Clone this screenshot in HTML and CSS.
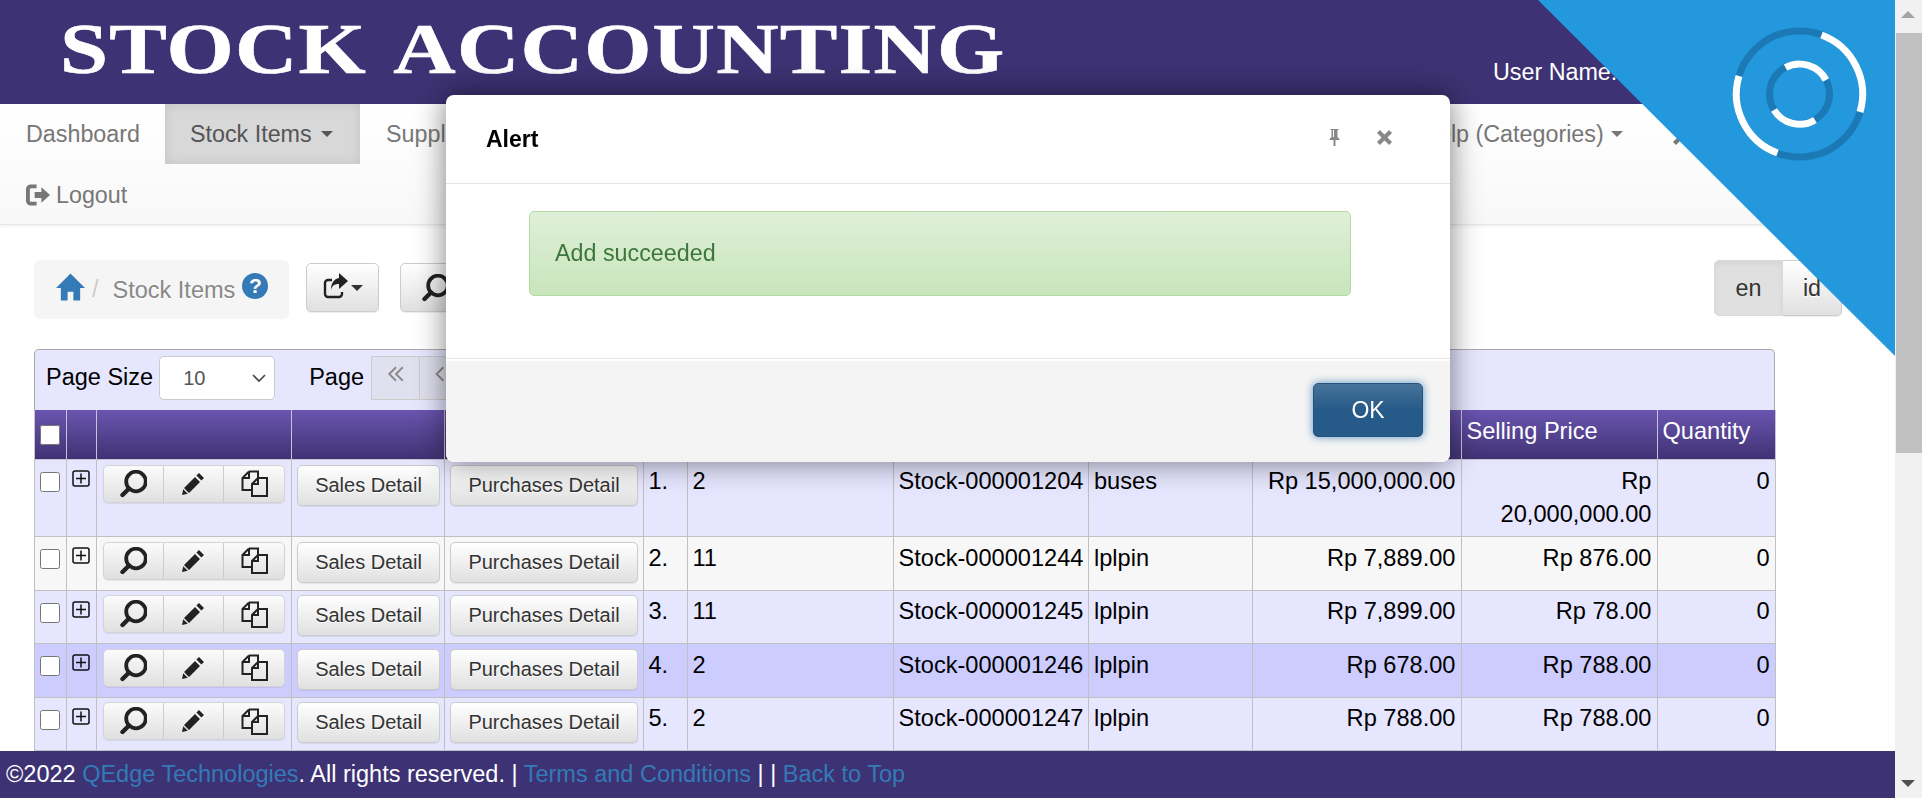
FILE: index.html
```html
<!DOCTYPE html>
<html lang="en">

<head>
    <meta charset="UTF-8">
    <meta name="viewport" content="width=device-width, initial-scale=1.0">
    <title>Stock Items</title>
    <link rel="stylesheet" href="styles.css">
</head>

<body>
    <div class="page">
        <header class="site-header">
            <div class="logo">STOCK ACCOUNTING</div>
            <div class="user-name">User Name: admin</div>
        </header>

        <nav class="navbar">
            <a class="nav-item nav-first">Dashboard</a>
            <a class="nav-item active">Stock Items <span class="caret"></span></a>
            <a class="nav-item">Suppliers <span class="caret"></span></a>
            <a class="nav-item nav-help">Help (Categories) <span class="caret"></span></a>
            <a class="nav-item nav-tools">
                <svg class="icon-nav" viewBox="0 0 24 24"><path d="M2 20l9-9 3 3-9 9z" fill="#777"/></svg>
            </a>
            <span class="nav-break"></span>
            <a class="nav-item nav-logout">
                <svg class="icon-logout" viewBox="0 0 26 24">
                    <path d="M11 3H5a3 3 0 0 0-3 3v12a3 3 0 0 0 3 3h6" fill="none" stroke="#777" stroke-width="4"/>
                    <path d="M9 9h7V4l9 8-9 8v-5H9z" fill="#777"/>
                </svg>
                Logout
            </a>
        </nav>

        <main class="content">
            <div class="top-row">
                <div class="breadcrumb">
                    <svg class="icon-home" viewBox="0 0 30 28"><path d="M15 0l15 15h-5v13h-7v-9h-6v9H5V15H0z" fill="#337ab7"/></svg>
                    <span class="crumb-sep">/</span>
                    <span class="crumb-text">Stock Items</span>
                    <span class="help-badge">?</span>
                </div>
                <button class="btn btn-export">
                    <svg class="icon-export" viewBox="0 0 26 28">
                        <path d="M9 8H5a3 3 0 0 0-3 3v11a3 3 0 0 0 3 3h11a3 3 0 0 0 3-3v-2" fill="none" stroke="#222" stroke-width="2.4"/>
                        <path d="M16 1l9 8-9 8v-5c-5 0-7 2-8 6 0-7 3-11 8-12z" fill="#222"/>
                    </svg>
                    <span class="caret caret-dark"></span>
                </button>
                <button class="btn btn-search">
                    <svg class="icon-search" viewBox="0 0 28 28"><use href="#search"/></svg>
                </button>
                <div class="lang-group">
                    <button class="btn lang pressed">en</button>
                    <button class="btn lang">id</button>
                </div>
            </div>

            <section class="grid">
                <div class="toolbar">
                    <label class="tool-label">Page Size</label>
                    <div class="select-wrap">
                        <select class="page-size">
                            <option>10</option>
                        </select>
                        <svg class="select-arrow" viewBox="0 0 14 9"><path d="M1 1l6 6 6-6" fill="none" stroke="#444" stroke-width="1.600"/></svg>
                    </div>
                    <label class="tool-label tool-page">Page</label>
                    <div class="pager">
                        <span class="pager-btn">
                            <svg viewBox="0 0 16 16"><path d="M8 2L2 8l6 6M14 2L8 8l6 6" fill="none" stroke="#888" stroke-width="1.6"/></svg>
                        </span>
                        <span class="pager-btn pager-prev">
                            <svg viewBox="0 0 16 16"><path d="M11 2L5 8l6 6" fill="none" stroke="#888" stroke-width="1.6"/></svg>
                        </span>
                    </div>
                </div>

                <table class="stock-table">
                    <colgroup>
                        <col class="c-check"><col class="c-plus"><col class="c-actions"><col class="c-sales"><col class="c-purchases">
                        <col class="c-no"><col class="c-cat"><col class="c-code"><col class="c-name">
                        <col class="c-cost"><col class="c-price"><col class="c-qty">
                    </colgroup>
                    <thead>
                        <tr>
                            <th><input type="checkbox" class="check"></th>
                            <th></th>
                            <th></th>
                            <th></th>
                            <th></th>
                            <th></th>
                            <th></th>
                            <th></th>
                            <th></th>
                            <th></th>
                            <th>Selling Price</th>
                            <th>Quantity</th>
                        </tr>
                    </thead>
                    <tbody id="rows"></tbody>
                </table>
            </section>
        </main>
    </div>

    <svg class="sprite">
        <symbol id="search" viewBox="0 0 28 28">
            <circle cx="17" cy="11.500" r="9.800" fill="none" stroke="currentColor" stroke-width="3.800"/>
            <path d="M10 18.500L3.500 25" stroke="currentColor" stroke-width="4.400" stroke-linecap="round"/>
        </symbol>
        <symbol id="pencil" viewBox="0 0 24 24">
            <path d="M18 1l5 5-2.600 2.600-5-5zM14 5l5 5L8 21l-5-5zM2.200 17.200l4.600 4.600L1 23z" fill="currentColor"/>
        </symbol>
        <symbol id="copy" viewBox="0 0 27 27">
            <path d="M8 1.500h9v6M8 1.500L1.500 8v12h9.500M8 1.500V8H1.500" fill="none" stroke="currentColor" stroke-width="2"/>
            <path d="M17 8h9v18H11V14zM17 8v6h-6" fill="none" stroke="currentColor" stroke-width="2"/>
        </symbol>
    </svg>

    <!-- corner ribbon with spinner -->
    <svg class="ribbon" viewBox="0 0 357 356">
        <polygon points="0,0 357,0 357,356" fill="#2398dd"/>
        <circle cx="261.500" cy="94" r="63" fill="none" stroke="#1b7ab6" stroke-width="7"/>
        <circle cx="261.500" cy="94" r="30" fill="none" stroke="#1b7ab6" stroke-width="7"/>
        <path d="M283.500 35A63 63 0 0 1 322 112" fill="none" stroke="#fff" stroke-width="7"/>
        <path d="M239.500 153A63 63 0 0 1 201 76" fill="none" stroke="#fff" stroke-width="7"/>
        <path d="M247.500 67.500A30 30 0 0 1 288 80" fill="none" stroke="#fff" stroke-width="7"/>
        <path d="M236 110A30 30 0 0 0 277 120" fill="none" stroke="#fff" stroke-width="7"/>
    </svg>

    <div class="modal">
        <div class="modal-header">
            <h4 class="modal-title">Alert</h4>
            <svg class="icon-pin" viewBox="0 0 12 18"><path d="M2 1h8v1H9v7l2 2v1H7v6H5v-6H1v-1l2-2V2H2zM4.500 2v7h1V2z" fill="#888"/></svg>
            <svg class="icon-close" viewBox="0 0 14 14"><path d="M2 2l10 10M12 2L2 12" stroke="#888" stroke-width="3.400"/></svg>
        </div>
        <div class="modal-body">
            <div class="alert-success">Add succeeded</div>
        </div>
        <div class="modal-footer">
            <button class="btn-ok">OK</button>
        </div>
    </div>

    <footer class="site-footer">©2022 <a>QEdge Technologies</a>. All rights reserved. | <a>Terms and Conditions</a> | | <a>Back to Top</a></footer>

    <div class="scrollbar">
        <span class="arrow-up"></span>
        <span class="thumb"></span>
        <span class="arrow-down"></span>
    </div>

    <script>
        const data = [
            ['1.', '2', 'Stock-000001204', 'buses', 'Rp 15,000,000.00', 'Rp 20,000,000.00', '0', 'first'],
            ['2.', '11', 'Stock-000001244', 'lplpin', 'Rp 7,889.00', 'Rp 876.00', '0', 'plain'],
            ['3.', '11', 'Stock-000001245', 'lplpin', 'Rp 7,899.00', 'Rp 78.00', '0', ''],
            ['4.', '2', 'Stock-000001246', 'lplpin', 'Rp 678.00', 'Rp 788.00', '0', 'hover'],
            ['5.', '2', 'Stock-000001247', 'lplpin', 'Rp 788.00', 'Rp 788.00', '0', '']
        ];

        document.getElementById('rows').innerHTML = data.map((row) => `
            <tr class="${row[7]}">
                <td class="cell-check"><input type="checkbox" class="check"></td>
                <td class="cell-plus"><svg class="icon-plus" viewBox="0 0 18 17"><rect x="1" y="1" width="16" height="15" rx="2" fill="none" stroke="#111" stroke-width="1.500"/><path d="M9 3.500v10M4 8.500h10" stroke="#111" stroke-width="1.500"/></svg></td>
                <td class="cell-btn cell-group">
                    <div class="btn-group">
                        <span class="btn-part"><svg class="icon-search" viewBox="0 0 28 28"><use href="#search"/></svg></span>
                        <span class="btn-part"><svg class="icon-pencil" viewBox="0 0 24 24"><use href="#pencil"/></svg></span>
                        <span class="btn-part"><svg class="icon-copy" viewBox="0 0 27 27"><use href="#copy"/></svg></span>
                    </div>
                </td>
                <td class="cell-btn"><button class="btn btn-detail btn-sales">Sales Detail</button></td>
                <td class="cell-btn"><button class="btn btn-detail btn-purchases">Purchases Detail</button></td>
                <td>${row[0]}</td>
                <td>${row[1]}</td>
                <td class="code">${row[2]}</td>
                <td>${row[3]}</td>
                <td class="num">${row[4]}</td>
                <td class="num">${row[5]}</td>
                <td class="num">${row[6]}</td>
            </tr>`).join('');
    </script>
</body>

</html>
```

FILE: styles.css
```css
html,
body {
    height: 798px;
}

body {
    margin: 0;
    overflow: hidden;
    font-family: "Liberation Sans", Arial, sans-serif;
    font-size: 23.300px;
    color: #000;
    background-color: #fff;
}

.page {
    width: 1895px;
    height: 798px;
    overflow: hidden;
}

.sprite {
    display: none;
}

.site-header {
    display: flex;
    justify-content: space-between;
    height: 104px;
    background-color: #3d3273;
    color: #fff;
}

.logo {
    padding: 3px 0 0 50px;
    font-family: "Liberation Serif", serif;
    font-size: 72px;
    font-weight: bold;
    line-height: 92px;
    letter-spacing: 1px;
    word-spacing: 7px;
    white-space: nowrap;
    transform: scaleX(1.2);
    transform-origin: left center;
    -webkit-text-stroke: 0.6px #fff;
}

.user-name {
    padding-top: 56px;
    width: 402px;
    white-space: nowrap;
    line-height: 32px;
}

.navbar {
    display: flex;
    flex-wrap: wrap;
    height: 120px;
    background: linear-gradient(to bottom, #fff, #f8f8f8);
    border-bottom: 1px solid #e7e7e7;
    box-shadow: 0 1px 4px rgba(0, 0, 0, 0.08);
    color: #777;
}

.nav-item {
    display: flex;
    align-items: center;
    gap: 7px;
    height: 60px;
    padding: 0 26px;
    box-sizing: border-box;
    white-space: nowrap;
}

.nav-first {
    padding-right: 25px;
}

.nav-item.active {
    gap: 9px;
    width: 195px;
    padding-left: 25px;
    background: #d8d8d8;
    box-shadow: inset 0 0 12px rgba(0, 0, 0, 0.1);
    color: #555;
}

.nav-help {
    margin-left: 867px;
}

.nav-tools {
    padding: 0;
    margin-left: 22px;
}

.icon-nav {
    width: 24px;
    height: 24px;
}

.nav-break {
    flex-basis: 100%;
    height: 0;
}

.nav-logout {
    gap: 5px;
    padding-top: 2px;
}

.icon-logout {
    width: 25px;
    height: 24px;
}

.caret {
    display: inline-block;
    border-top: 6px solid currentColor;
    border-left: 6px solid transparent;
    border-right: 6px solid transparent;
}

.caret-dark {
    color: #333;
}

.content {
    padding: 35px 0 0 34px;
}

.top-row {
    display: flex;
    align-items: flex-start;
    height: 89px;
}

.breadcrumb {
    display: flex;
    align-items: center;
    width: 255px;
    height: 59px;
    padding-left: 22px;
    box-sizing: border-box;
    background-color: #f5f5f5;
    border-radius: 6px;
    color: #777;
    font-size: 23.500px;
}

.icon-home {
    width: 29px;
    height: 28px;
    margin-top: -6px;
}

.crumb-sep {
    margin-left: 7px;
    color: #ccc;
}

.crumb-text {
    margin-left: 14px;
    margin-top: 2px;
    color: #888;
    text-shadow: 0 1px 0 #fff;
}

.help-badge {
    width: 26px;
    height: 26px;
    margin: -8px 0 0 7px;
    border-radius: 50%;
    background-color: #337ab7;
    color: #fff;
    font-size: 21px;
    font-weight: bold;
    line-height: 26px;
    text-align: center;
}

.btn {
    border: 1px solid #ccc;
    border-radius: 5px;
    background: linear-gradient(to bottom, #fff, #e0e0e0);
    box-shadow: inset 0 1px 0 rgba(255, 255, 255, 0.15), 0 1px 1px rgba(0, 0, 0, 0.075);
    color: #333;
    font-family: inherit;
    text-shadow: 0 1px 0 #fff;
    padding: 0;
}

.btn-export {
    display: flex;
    align-items: center;
    justify-content: center;
    gap: 2px;
    width: 73px;
    height: 49px;
    margin: 3px 0 0 17px;
}

.icon-export {
    width: 26px;
    height: 28px;
    margin-top: -4px;
}

.btn-search {
    width: 100px;
    height: 49px;
    margin: 3px 0 0 21px;
    display: flex;
    align-items: center;
    padding-left: 20px;
}

.lang-group {
    display: flex;
    margin-left: 1214px;
}

.lang {
    width: 59px;
    height: 56px;
    font-size: 23.300px;
    border-radius: 0 5px 5px 0;
    border-left: 0;
}

.lang.pressed {
    width: 69px;
    background: #e0e0e0;
    border-radius: 5px 0 0 5px;
    border: 1px solid #dbdbdb;
    box-shadow: inset 0 3px 5px rgba(0, 0, 0, 0.05);
    text-shadow: none;
}

.grid {
    width: 1741px;
}

.toolbar {
    display: flex;
    align-items: center;
    height: 61px;
    padding: 0 0 5px 11px;
    box-sizing: border-box;
    background-color: #e6e6ff;
    border: 1px solid #aaa;
    border-bottom: 0;
    border-radius: 5px 5px 0 0;
    font-size: 23.500px;
}

.tool-label {
    white-space: nowrap;
}

.select-wrap {
    position: relative;
    margin-left: 6px;
}

.page-size {
    display: block;
    width: 116px;
    height: 44px;
    padding-left: 23px;
    appearance: none;
    background-color: #fff;
    border: 1px solid #ccc;
    border-radius: 5px;
    color: #555;
    font-family: inherit;
    font-size: 20px;
}

.select-arrow {
    position: absolute;
    right: 9px;
    top: 18px;
    width: 14px;
    height: 9px;
}

.tool-page {
    margin-left: 34px;
}

.pager {
    display: flex;
    margin-left: 7px;
}

.pager-btn {
    display: flex;
    justify-content: center;
    width: 49px;
    height: 44px;
    box-sizing: border-box;
    background-color: #e0e0ee;
    border: 1px solid #ccc;
    margin-right: -1px;
}

.pager-btn svg {
    width: 18px;
    height: 18px;
    margin-top: 8px;
}

.pager-prev {
    justify-content: flex-start;
    padding-left: 11px;
}

.stock-table {
    width: 100%;
    table-layout: fixed;
    border-collapse: collapse;
    font-size: 23.600px;
}

.c-check { width: 31.500px; }
.c-plus { width: 30px; }
.c-actions { width: 195.500px; }
.c-sales { width: 153px; }
.c-purchases { width: 198.500px; }
.c-no { width: 44px; }
.c-cat { width: 206px; }
.c-code { width: 195.500px; }
.c-name { width: 163.500px; }
.c-cost { width: 209px; }
.c-price { width: 196px; }
.c-qty { width: 118px; }

.stock-table th {
    height: 42px;
    padding: 0 5px 7px;
    background: linear-gradient(to bottom, #6a55b0, #3f3273);
    border: 1px solid #c4c4d4;
    border-top: 0;
    color: #fff;
    font-size: 23.600px;
    font-weight: normal;
    text-align: left;
}

.stock-table td {
    height: 53.500px;
    padding: 4.500px 5px 0;
    box-sizing: border-box;
    border: 1px solid #c0c0c0;
    background-color: #e6e6ff;
    line-height: 33.700px;
    vertical-align: top;
    white-space: normal;
}

.stock-table tr.first td {
    height: 77px;
}

.stock-table tr.plain td {
    background-color: #f7f7f7;
}

.stock-table tr.hover td {
    background-color: #ccccff;
}

.stock-table .num {
    text-align: right;
}

.stock-table .code {
    white-space: nowrap;
}

.stock-table .cell-check {
    padding: 8px 0 0 5px;
}

.stock-table th:first-child {
    padding: 0 0 3px 5px;
}

.check {
    display: block;
    width: 20px;
    height: 20px;
    margin: 4px 0 0;
}

.stock-table .cell-plus {
    padding: 10px 0 0 5px;
    line-height: 0;
}

.icon-plus {
    width: 18px;
    height: 17px;
}

.stock-table .cell-btn {
    padding: 4.500px 0 0 5px;
    line-height: normal;
}

.stock-table .cell-group {
    padding-left: 6px;
}

.btn-group {
    display: flex;
    width: 182px;
    height: 38px;
    box-sizing: border-box;
    border: 1px solid #d4d4d4;
    border-radius: 5px;
    background: linear-gradient(to bottom, #fbfbfb, #e0e0e0);
    box-shadow: 0 1px 1px rgba(0, 0, 0, 0.075);
}

.btn-part {
    display: flex;
    align-items: center;
    justify-content: center;
    flex: 1;
    border-right: 1px solid #ccc;
    color: #222;
}

.btn-part:last-child {
    border-right: 0;
}

.icon-search {
    width: 28px;
    height: 28px;
    color: #222;
}

.icon-pencil {
    width: 24px;
    height: 24px;
}

.icon-copy {
    width: 27px;
    height: 27px;
    margin-left: 2px;
}

.btn-detail {
    display: block;
    height: 41px;
    font-size: 20px;
}

.btn-sales {
    width: 143px;
}

.btn-purchases {
    width: 188px;
}

.ribbon {
    position: fixed;
    top: 0;
    left: 1538px;
    width: 357px;
    height: 356px;
}

.modal {
    position: fixed;
    top: 95px;
    left: 446px;
    width: 1004px;
    height: 367px;
    background-color: #fff;
    border-radius: 8px;
    box-shadow: 0 0 30px rgba(0, 0, 0, 0.5);
    overflow: hidden;
}

.modal-header {
    display: flex;
    align-items: center;
    height: 89px;
    box-sizing: border-box;
    padding: 0 57px 0 40px;
    border-bottom: 1px solid #e5e5e5;
}

.modal-title {
    flex: 1;
    margin: 0;
    font-size: 23px;
}

.icon-pin {
    width: 13px;
    height: 18px;
    margin: -4px 35px 0 0;
}

.icon-close {
    width: 17px;
    height: 17px;
    margin-top: -4px;
}

.modal-body {
    height: 175px;
    box-sizing: border-box;
    padding: 27px 99px 0 83px;
    border-bottom: 1px solid #e5e5e5;
}

.alert-success {
    height: 85px;
    box-sizing: border-box;
    padding-left: 25px;
    border: 1px solid #b2dba1;
    border-radius: 5px;
    background: linear-gradient(to bottom, #dff0d8, #c8e5bc);
    color: #3c763d;
    line-height: 83px;
}

.modal-footer {
    display: flex;
    justify-content: flex-end;
    height: 103px;
    box-sizing: border-box;
    padding: 22px 27px 0 0;
    border-top: 2px solid #fff;
    background-color: #f4f4f4;
}

.btn-ok {
    width: 110px;
    height: 54px;
    border: 1px solid #245580;
    border-radius: 5px;
    background: linear-gradient(to bottom, #47739a, #265a88 50%);
    box-shadow: 0 0 8px rgba(51, 122, 183, 0.8);
    color: #fff;
    font-family: inherit;
    font-size: 23px;
}

.site-footer {
    position: fixed;
    left: 0;
    top: 751px;
    width: 1895px;
    height: 47px;
    padding-left: 6px;
    box-sizing: border-box;
    background-color: #3d3273;
    color: #fff;
    font-size: 23.500px;
    line-height: 47px;
    white-space: nowrap;
}

.site-footer a {
    color: #337ab7;
}

.scrollbar {
    position: fixed;
    top: 0;
    left: 1895px;
    width: 27px;
    height: 798px;
    background-color: #f1f1f1;
}

.thumb {
    position: absolute;
    top: 33px;
    left: 1px;
    width: 26px;
    height: 420px;
    background-color: #c1c1c1;
}

.arrow-up,
.arrow-down {
    position: absolute;
    left: 6px;
    border-left: 7px solid transparent;
    border-right: 7px solid transparent;
}

.arrow-up {
    top: 11px;
    border-bottom: 7px solid #a3a3a3;
}

.arrow-down {
    bottom: 11px;
    border-top: 7px solid #505050;
}
```
